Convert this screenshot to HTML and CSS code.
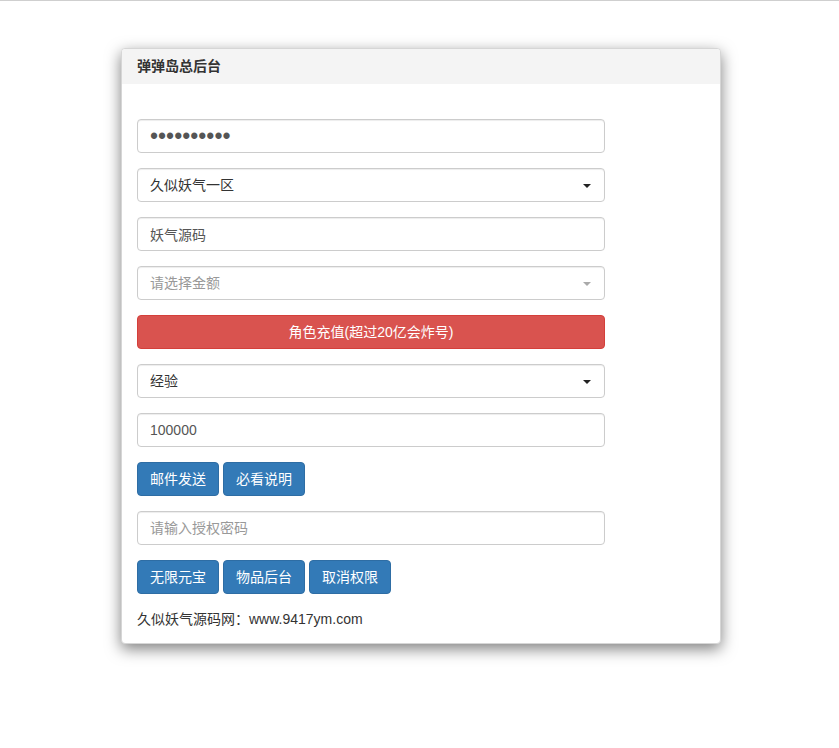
FILE: index.html
```html
<!DOCTYPE html>
<html lang="zh-CN">
<head>
<meta charset="utf-8">
<title>弹弹岛总后台</title>
<link rel="stylesheet" href="styles.css">
</head>
<body>
<div class="topline"></div>
<div class="panel">
  <div class="panel-heading">弹弹岛总后台</div>
  <div class="panel-body">
    <div class="form">
      <input class="form-control dots" type="password" value="1234567890">
      <div class="form-control select"><span>久似妖气一区</span><span class="caret"></span></div>
      <input class="form-control" type="text" value="妖气源码">
      <div class="form-control select placeholder"><span>请选择金额</span><span class="caret gray"></span></div>
      <button class="btn btn-danger btn-block">角色充值(超过20亿会炸号)</button>
      <div class="form-control select"><span>经验</span><span class="caret"></span></div>
      <input class="form-control" type="text" value="100000">
      <div class="btn-row">
        <button class="btn btn-primary">邮件发送</button>
        <button class="btn btn-primary">必看说明</button>
      </div>
      <input class="form-control" type="text" placeholder="请输入授权密码">
      <div class="btn-row">
        <button class="btn btn-primary">无限元宝</button>
        <button class="btn btn-primary">物品后台</button>
        <button class="btn btn-primary">取消权限</button>
      </div>
      <p class="footer-text">久似妖气源码网：www.9417ym.com</p>
    </div>
  </div>
</div>
</body>
</html>
```
FILE: styles.css
```css
* { box-sizing: border-box; }
html, body {
  margin: 0;
  padding: 0;
  background: #fff;
}
body {
  min-height: 748px;
  font-family: "Liberation Sans", "Noto Sans CJK SC", sans-serif;
  font-size: 14px;
  line-height: 1.42857;
  color: #333;
}
.topline {
  height: 1px;
  background: #cfcfcf;
}
.panel {
  width: 600px;
  margin: 47px 0 0 121px;
  background: #fff;
  border: 1px solid #d6d6d6;
  border-radius: 4px;
  box-shadow: 0 5px 15px rgba(0, 0, 0, 0.5);
}
.panel-heading {
  height: 35px;
  padding: 8px 15px 0;
  background: #f4f4f4;
  border-radius: 3px 3px 0 0;
  font-size: 14px;
  font-weight: bold;
  color: #333;
}
.panel-body {
  padding: 35px 15px 13px;
}
.form {
  width: 468px;
  display: flex;
  flex-direction: column;
  gap: 15px;
  align-items: stretch;
}
.form-control {
  display: block;
  width: 100%;
  height: 34px;
  padding: 6px 12px;
  font-family: inherit;
  font-size: 14px;
  line-height: 20px;
  color: #555;
  background: #fff;
  border: 1px solid #ccc;
  border-radius: 4px;
  box-shadow: inset 0 1px 1px rgba(0, 0, 0, 0.075);
  outline: none;
}
.form-control::placeholder { color: #999; }
.dots {
  font-size: 23px;
  line-height: 20px;
  padding: 0 12px;
  color: #555;
}
.select {
  display: flex;
  align-items: center;
  justify-content: space-between;
  color: #333;
  padding-right: 13px;
}
.select.placeholder { color: #999; }
.caret {
  width: 0;
  height: 0;
  border-left: 4px solid transparent;
  border-right: 4px solid transparent;
  border-top: 4px solid #222;
  margin-top: 1px;
}
.caret.gray { border-top-color: #aaa; }
.btn {
  display: inline-block;
  height: 34px;
  padding: 6px 12px;
  font-family: inherit;
  font-size: 14px;
  line-height: 20px;
  text-align: center;
  border: 1px solid transparent;
  border-radius: 4px;
  cursor: pointer;
}
.btn-block { width: 100%; }
.btn-danger {
  color: #fff;
  background: #d9534f;
  border-color: #d43f3a;
}
.btn-primary {
  color: #fff;
  background: #337ab7;
  border-color: #2e6da4;
}
.btn-row {
  display: flex;
  gap: 4px;
}
.footer-text {
  margin: 1px 0 0;
  color: #333;
}
```
